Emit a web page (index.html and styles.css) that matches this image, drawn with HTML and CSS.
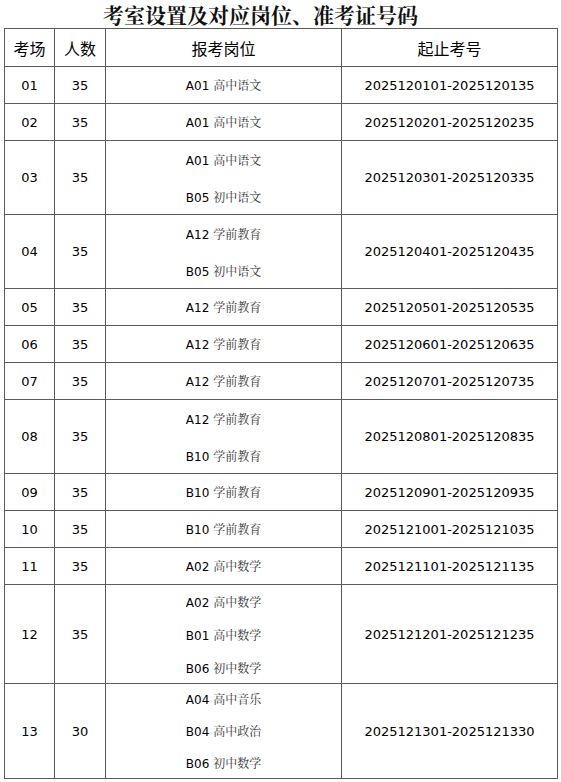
FILE: index.html
```html
<!DOCTYPE html>
<html lang="zh">
<head>
<meta charset="utf-8">
<title>考室设置及对应岗位、准考证号码</title>
<link rel="stylesheet" href="styles.css">
</head>
<body>
<h1 class="title">考室设置及对应岗位、准考证号码</h1>
<div class="grid">
  <div class="cell head r-head">考场</div>
  <div class="cell head r-head">人数</div>
  <div class="cell head r-head">报考岗位</div>
  <div class="cell head r-head">起止考号</div>

  <div class="cell num r-1">01</div><div class="cell num r-1">35</div>
  <div class="cell post r-1"><div class="ln"><span class="code">A01</span> <span class="subj">高中语文</span></div></div>
  <div class="cell num r-1">2025120101-2025120135</div>

  <div class="cell num r-1">02</div><div class="cell num r-1">35</div>
  <div class="cell post r-1"><div class="ln"><span class="code">A01</span> <span class="subj">高中语文</span></div></div>
  <div class="cell num r-1">2025120201-2025120235</div>

  <div class="cell num r-2">03</div><div class="cell num r-2">35</div>
  <div class="cell post r-2">
    <div class="ln ln2"><span class="code">A01</span> <span class="subj">高中语文</span></div>
    <div class="ln ln2"><span class="code">B05</span> <span class="subj">初中语文</span></div>
  </div>
  <div class="cell num r-2">2025120301-2025120335</div>

  <div class="cell num r-2">04</div><div class="cell num r-2">35</div>
  <div class="cell post r-2">
    <div class="ln ln2"><span class="code">A12</span> <span class="subj">学前教育</span></div>
    <div class="ln ln2"><span class="code">B05</span> <span class="subj">初中语文</span></div>
  </div>
  <div class="cell num r-2">2025120401-2025120435</div>

  <div class="cell num r-1">05</div><div class="cell num r-1">35</div>
  <div class="cell post r-1"><div class="ln"><span class="code">A12</span> <span class="subj">学前教育</span></div></div>
  <div class="cell num r-1">2025120501-2025120535</div>

  <div class="cell num r-1">06</div><div class="cell num r-1">35</div>
  <div class="cell post r-1"><div class="ln"><span class="code">A12</span> <span class="subj">学前教育</span></div></div>
  <div class="cell num r-1">2025120601-2025120635</div>

  <div class="cell num r-1">07</div><div class="cell num r-1">35</div>
  <div class="cell post r-1"><div class="ln"><span class="code">A12</span> <span class="subj">学前教育</span></div></div>
  <div class="cell num r-1">2025120701-2025120735</div>

  <div class="cell num r-2">08</div><div class="cell num r-2">35</div>
  <div class="cell post r-2">
    <div class="ln ln2"><span class="code">A12</span> <span class="subj">学前教育</span></div>
    <div class="ln ln2"><span class="code">B10</span> <span class="subj">学前教育</span></div>
  </div>
  <div class="cell num r-2">2025120801-2025120835</div>

  <div class="cell num r-1">09</div><div class="cell num r-1">35</div>
  <div class="cell post r-1"><div class="ln"><span class="code">B10</span> <span class="subj">学前教育</span></div></div>
  <div class="cell num r-1">2025120901-2025120935</div>

  <div class="cell num r-1">10</div><div class="cell num r-1">35</div>
  <div class="cell post r-1"><div class="ln"><span class="code">B10</span> <span class="subj">学前教育</span></div></div>
  <div class="cell num r-1">2025121001-2025121035</div>

  <div class="cell num r-1">11</div><div class="cell num r-1">35</div>
  <div class="cell post r-1"><div class="ln"><span class="code">A02</span> <span class="subj">高中数学</span></div></div>
  <div class="cell num r-1">2025121101-2025121135</div>

  <div class="cell num r-3">12</div><div class="cell num r-3">35</div>
  <div class="cell post r-3">
    <div class="ln ln3"><span class="code">A02</span> <span class="subj">高中数学</span></div>
    <div class="ln ln3"><span class="code">B01</span> <span class="subj">高中数学</span></div>
    <div class="ln ln3"><span class="code">B06</span> <span class="subj">初中数学</span></div>
  </div>
  <div class="cell num r-3">2025121201-2025121235</div>

  <div class="cell num r-3b">13</div><div class="cell num r-3b">30</div>
  <div class="cell post r-3b">
    <div class="ln ln3b"><span class="code">A04</span> <span class="subj">高中音乐</span></div>
    <div class="ln ln3b"><span class="code">B04</span> <span class="subj">高中政治</span></div>
    <div class="ln ln3b"><span class="code">B06</span> <span class="subj">初中数学</span></div>
  </div>
  <div class="cell num r-3b">2025121301-2025121330</div>
</div>
</body>
</html>
```
FILE: styles.css
```css
html, body {
  margin: 0;
  padding: 0;
  background: #ffffff;
}
body {
  width: 561px;
  font-family: "DejaVu Sans", "Noto Sans CJK SC", sans-serif;
  color: #000;
}
.title {
  margin: 0;
  padding: 0 40px 0 0;
  height: 28px;
  line-height: 28px;
  text-align: center;
  font-family: "Noto Serif CJK SC", "Noto Sans CJK SC", serif;
  font-size: 21px;
  font-weight: bold;
  color: #111;
}
.grid {
  margin-left: 4px;
  width: 554px;
  box-sizing: border-box;
  display: grid;
  grid-template-columns: 50px 51px 236px 216px;
  border-left: 1px solid #5a5a5a;
  border-top: 1px solid #5a5a5a;
}
.cell {
  box-sizing: border-box;
  border-right: 1px solid #5a5a5a;
  border-bottom: 1px solid #5a5a5a;
  display: flex;
  align-items: center;
  justify-content: center;
  overflow: hidden;
}
.head {
  font-family: "Noto Sans CJK SC", sans-serif;
  font-size: 16px;
}
.num {
  font-size: 13px;
}
.post {
  flex-direction: column;
  font-size: 12px;
}
.ln {
  line-height: 16px;
  white-space: nowrap;
}
.ln2 {
  height: 37px;
  line-height: 37px;
}
.ln3 {
  height: 33px;
  line-height: 33px;
}
.ln3b {
  height: 32px;
  line-height: 32px;
}
.code {
  font-family: "DejaVu Sans", sans-serif;
}
.subj {
  font-family: "Noto Serif CJK SC", "Noto Sans CJK SC", serif;
  color: #333;
}
.r-head { height: 38px; }
.r-1 { height: 37px; }
.r-2 { height: 74px; }
.r-3 { height: 99px; }
.r-3b { height: 95px; }
```
